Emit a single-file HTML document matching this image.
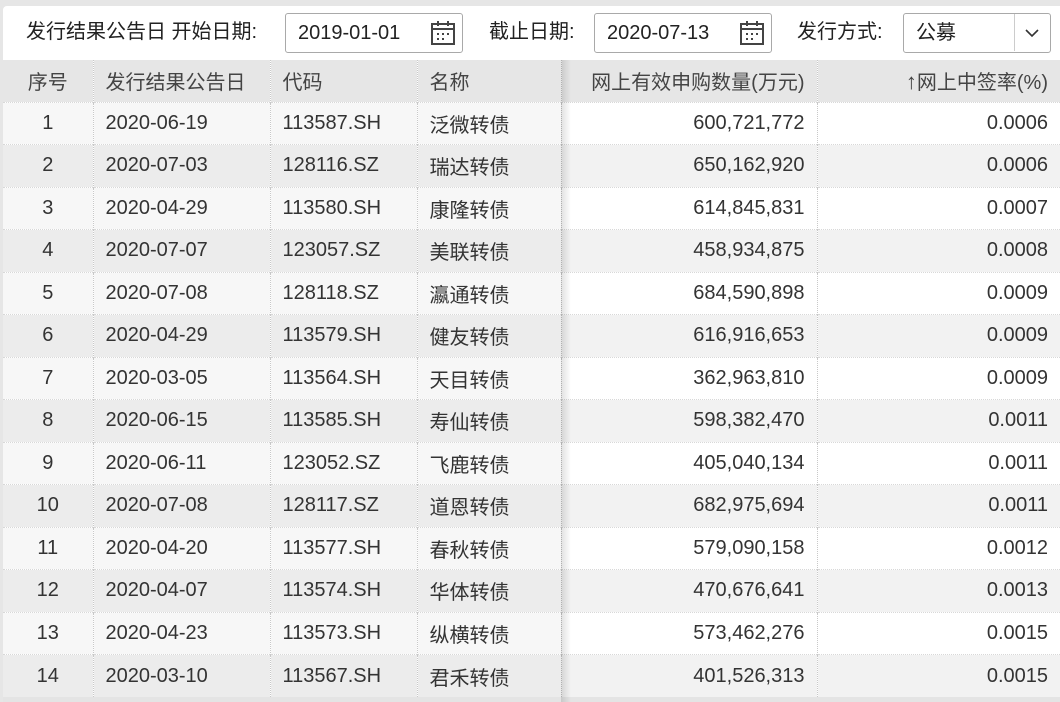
<!DOCTYPE html>
<html><head><meta charset="utf-8"><style>
*{margin:0;padding:0;box-sizing:border-box}
body{width:1060px;height:702px;overflow:hidden;background:#e6e6e6;font-family:"Liberation Sans","Noto Sans CJK SC",sans-serif;color:#333}
.panel{position:absolute;left:3px;top:6px;width:1057px;height:696px;background:#fff;border-radius:4px 0 0 0;overflow:hidden}
.t{position:absolute;font-size:20px;color:#222;top:13px;line-height:26px}
.box{position:absolute;top:7px;height:40px;border:1.5px solid #a9a9a9;border-radius:3px;background:#fff;font-size:20px;color:#222;line-height:38px;padding-left:12px}
.cal{position:absolute;right:6px;top:6px}
table{position:absolute;left:0;top:54px;border-collapse:collapse;font-size:20px;table-layout:fixed}
td,th{height:42.5px;font-weight:normal;padding:0 12px;white-space:nowrap;border-left:1px dotted #c8c8c8;overflow:hidden}
th{background:#e6e6e6;color:#444;text-align:left;height:42px}
td{border-top:1px dotted #d8d8d8;color:#333}
td:first-child,th:first-child{border-left:none;text-align:center}
.r{text-align:right}
tr.o td{background:#fff}tr.e td{background:#f2f2f2}
tr.o td.f{background:#f7f7f7}tr.e td.f{background:#ececec}
.sh{position:absolute;left:558px;top:54px;width:10px;height:650px;background:linear-gradient(to right,rgba(0,0,0,0.12),rgba(0,0,0,0))}
</style></head><body>
<div class="panel">
<div class="t" style="left:23px">发行结果公告日 开始日期:</div>
<div class="box" style="left:282px;width:178px">2019-01-01<svg class="cal" width="26" height="26" viewBox="0 0 26 26"><rect x="2" y="4" width="22" height="20" fill="none" stroke="#444" stroke-width="2"/><line x1="2" y1="9" x2="24" y2="9" stroke="#444" stroke-width="2"/><line x1="8" y1="1" x2="8" y2="6" stroke="#444" stroke-width="2"/><line x1="18" y1="1" x2="18" y2="6" stroke="#444" stroke-width="2"/><g fill="#444"><rect x="7" y="13" width="2" height="2"/><rect x="12" y="13" width="2" height="2"/><rect x="17" y="13" width="2" height="2"/><rect x="7" y="18" width="2" height="2"/><rect x="12" y="18" width="2" height="2"/></g></svg></div>
<div class="t" style="left:486px">截止日期:</div>
<div class="box" style="left:591px;width:178px">2020-07-13<svg class="cal" width="26" height="26" viewBox="0 0 26 26"><rect x="2" y="4" width="22" height="20" fill="none" stroke="#444" stroke-width="2"/><line x1="2" y1="9" x2="24" y2="9" stroke="#444" stroke-width="2"/><line x1="8" y1="1" x2="8" y2="6" stroke="#444" stroke-width="2"/><line x1="18" y1="1" x2="18" y2="6" stroke="#444" stroke-width="2"/><g fill="#444"><rect x="7" y="13" width="2" height="2"/><rect x="12" y="13" width="2" height="2"/><rect x="17" y="13" width="2" height="2"/><rect x="7" y="18" width="2" height="2"/><rect x="12" y="18" width="2" height="2"/></g></svg></div>
<div class="t" style="left:794px">发行方式:</div>
<div class="box" style="left:900px;width:148px">公募<div style="position:absolute;left:110px;top:0;width:1px;height:37px;background:#ccc"></div><svg style="position:absolute;left:120px;top:13px" width="16" height="12" viewBox="0 0 16 12"><path d="M2 3 L8 9 L14 3" fill="none" stroke="#333" stroke-width="1.6"/></svg></div>
<table>
<colgroup><col style="width:90px"><col style="width:177px"><col style="width:147px"><col style="width:144px"><col style="width:256px"><col style="width:243px"></colgroup>
<tr><th>序号</th><th>发行结果公告日</th><th>代码</th><th>名称</th><th class="r">网上有效申购数量(万元)</th><th class="r"><span style="font-size:22px">↑</span>网上中签率(%)</th></tr>
<tr class="o"><td class="f">1</td><td class="f">2020-06-19</td><td class="f">113587.SH</td><td class="f">泛微转债</td><td class="r">600,721,772</td><td class="r">0.0006</td></tr>
<tr class="e"><td class="f">2</td><td class="f">2020-07-03</td><td class="f">128116.SZ</td><td class="f">瑞达转债</td><td class="r">650,162,920</td><td class="r">0.0006</td></tr>
<tr class="o"><td class="f">3</td><td class="f">2020-04-29</td><td class="f">113580.SH</td><td class="f">康隆转债</td><td class="r">614,845,831</td><td class="r">0.0007</td></tr>
<tr class="e"><td class="f">4</td><td class="f">2020-07-07</td><td class="f">123057.SZ</td><td class="f">美联转债</td><td class="r">458,934,875</td><td class="r">0.0008</td></tr>
<tr class="o"><td class="f">5</td><td class="f">2020-07-08</td><td class="f">128118.SZ</td><td class="f">瀛通转债</td><td class="r">684,590,898</td><td class="r">0.0009</td></tr>
<tr class="e"><td class="f">6</td><td class="f">2020-04-29</td><td class="f">113579.SH</td><td class="f">健友转债</td><td class="r">616,916,653</td><td class="r">0.0009</td></tr>
<tr class="o"><td class="f">7</td><td class="f">2020-03-05</td><td class="f">113564.SH</td><td class="f">天目转债</td><td class="r">362,963,810</td><td class="r">0.0009</td></tr>
<tr class="e"><td class="f">8</td><td class="f">2020-06-15</td><td class="f">113585.SH</td><td class="f">寿仙转债</td><td class="r">598,382,470</td><td class="r">0.0011</td></tr>
<tr class="o"><td class="f">9</td><td class="f">2020-06-11</td><td class="f">123052.SZ</td><td class="f">飞鹿转债</td><td class="r">405,040,134</td><td class="r">0.0011</td></tr>
<tr class="e"><td class="f">10</td><td class="f">2020-07-08</td><td class="f">128117.SZ</td><td class="f">道恩转债</td><td class="r">682,975,694</td><td class="r">0.0011</td></tr>
<tr class="o"><td class="f">11</td><td class="f">2020-04-20</td><td class="f">113577.SH</td><td class="f">春秋转债</td><td class="r">579,090,158</td><td class="r">0.0012</td></tr>
<tr class="e"><td class="f">12</td><td class="f">2020-04-07</td><td class="f">113574.SH</td><td class="f">华体转债</td><td class="r">470,676,641</td><td class="r">0.0013</td></tr>
<tr class="o"><td class="f">13</td><td class="f">2020-04-23</td><td class="f">113573.SH</td><td class="f">纵横转债</td><td class="r">573,462,276</td><td class="r">0.0015</td></tr>
<tr class="e"><td class="f">14</td><td class="f">2020-03-10</td><td class="f">113567.SH</td><td class="f">君禾转债</td><td class="r">401,526,313</td><td class="r">0.0015</td></tr>
</table>
<div style="position:absolute;left:0;top:691px;width:1057px;height:10px;background:#e4e4e4"></div>
<div class="sh"></div>
</div>
</body></html>
